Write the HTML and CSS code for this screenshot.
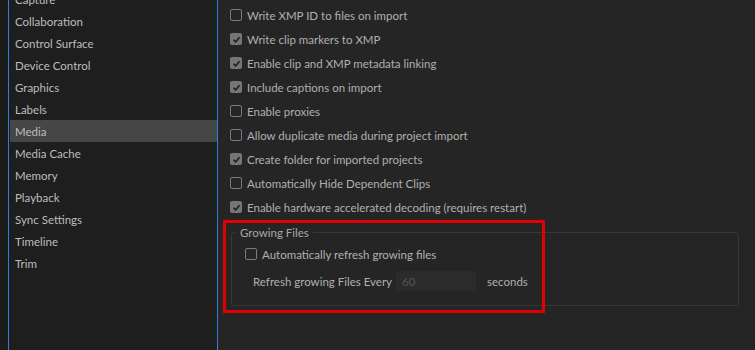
FILE: index.html
```html
<!DOCTYPE html>
<html lang="en">
<head>
    <meta charset="UTF-8">
    <title>Preferences - Media</title>
    <link rel="stylesheet" href="styles.css">
</head>
<body>
    <div class="app">
        <div class="gutter"></div>

        <!-- Categories -->
        <nav class="sidebar">
            <ul class="cat-list">
                <li>Capture</li>
                <li>Collaboration</li>
                <li>Control Surface</li>
                <li>Device Control</li>
                <li>Graphics</li>
                <li>Labels</li>
                <li class="active">Media</li>
                <li>Media Cache</li>
                <li>Memory</li>
                <li>Playback</li>
                <li>Sync Settings</li>
                <li>Timeline</li>
                <li>Trim</li>
            </ul>
        </nav>

        <!-- Media settings -->
        <main class="panel">
            <div class="opt"><span class="cb"></span>Write XMP ID to files on import</div>
            <div class="opt"><span class="cb on"><svg viewBox="0 0 13 13"><path d="M3.5 6.8 L5.6 8.9 L9.6 4.2"/></svg></span>Write clip markers to XMP</div>
            <div class="opt"><span class="cb on"><svg viewBox="0 0 13 13"><path d="M3.5 6.8 L5.6 8.9 L9.6 4.2"/></svg></span>Enable clip and XMP metadata linking</div>
            <div class="opt"><span class="cb on"><svg viewBox="0 0 13 13"><path d="M3.5 6.8 L5.6 8.9 L9.6 4.2"/></svg></span>Include captions on import</div>
            <div class="opt"><span class="cb"></span>Enable proxies</div>
            <div class="opt"><span class="cb"></span>Allow duplicate media during project import</div>
            <div class="opt"><span class="cb on"><svg viewBox="0 0 13 13"><path d="M3.5 6.8 L5.6 8.9 L9.6 4.2"/></svg></span>Create folder for imported projects</div>
            <div class="opt"><span class="cb"></span>Automatically Hide Dependent Clips</div>
            <div class="opt"><span class="cb on"><svg viewBox="0 0 13 13"><path d="M3.5 6.8 L5.6 8.9 L9.6 4.2"/></svg></span>Enable hardware accelerated decoding (requires restart)</div>

            <div class="group">
                <div class="group-title">Growing Files</div>
                <div class="opt opt-sub"><span class="cb"></span>Automatically refresh growing files</div>
                <div class="refresh-row">
                    <span>Refresh growing Files Every</span>
                    <input class="num" type="text" value="60" disabled>
                    <span>seconds</span>
                </div>
            </div>
        </main>
    </div>

    <!-- highlight -->
    <div class="highlight"></div>
</body>
</html>
```

FILE: styles.css
```css
body {
    margin: 0;
    background: #252525;
    font: 11.5px Lato, sans-serif;
    color: #b0b0b0;
    overflow: hidden;
}

.app {
    display: flex;
    height: 350px;
}

.gutter {
    width: 8px;
    background: #1c1c1c;
}

.sidebar {
    width: 208px;
    background: #1e1e1e;
    border-left: 1px solid #2d7fd8;
    border-right: 1px solid #2d7fd8;
    overflow: hidden;
}

.cat-list {
    list-style: none;
    margin: -12px 0 0 0;
    padding: 0;
}

.cat-list li {
    height: 22px;
    line-height: 23px;
    margin-left: 1px;
    padding-left: 5px;
    color: #bdbdbd;
}

.cat-list li.active {
    background: #464646;
}

.panel {
    flex: 1;
    padding: 3px 16px 0 12px;
}

.opt {
    display: flex;
    align-items: center;
    gap: 5px;
    height: 24px;
    white-space: nowrap;
}

.cb {
    width: 10px;
    height: 10px;
    border: 1.5px solid #7c7c7c;
    border-radius: 2px;
    flex: none;
    display: flex;
}

.cb.on {
    background: #767676;
    border-color: #767676;
}

.cb svg {
    width: 13px;
    height: 13px;
    margin: -1.5px;
    fill: none;
    stroke: #1e1e1e;
    stroke-width: 1.6;
}

.group {
    margin: 13px 0 0 1px;
    border: 1px solid #373737;
    border-radius: 3px;
    padding: 0 0 13px 13px;
}

.group-title {
    width: fit-content;
    margin: -8px 0 0 -9px;
    padding: 0 4px;
    height: 16px;
    line-height: 16px;
    background: #252525;
    color: #a8a8a8;
}

.opt-sub {
    height: 20px;
    margin-top: 3px;
}

.refresh-row {
    display: flex;
    align-items: center;
    height: 22px;
    margin-top: 6px;
    padding-left: 8px;
    gap: 4px;
    white-space: nowrap;
}

.num {
    width: 74px;
    height: 20px;
    padding: 0 0 0 6px;
    margin-right: 7px;
    border: none;
    border-radius: 2px;
    background: #2b2b2b;
    color: #555555;
    font: inherit;
}

.highlight {
    position: absolute;
    left: 223px;
    top: 220px;
    width: 316px;
    height: 87px;
    border: 3px solid #e00000;
}
```
